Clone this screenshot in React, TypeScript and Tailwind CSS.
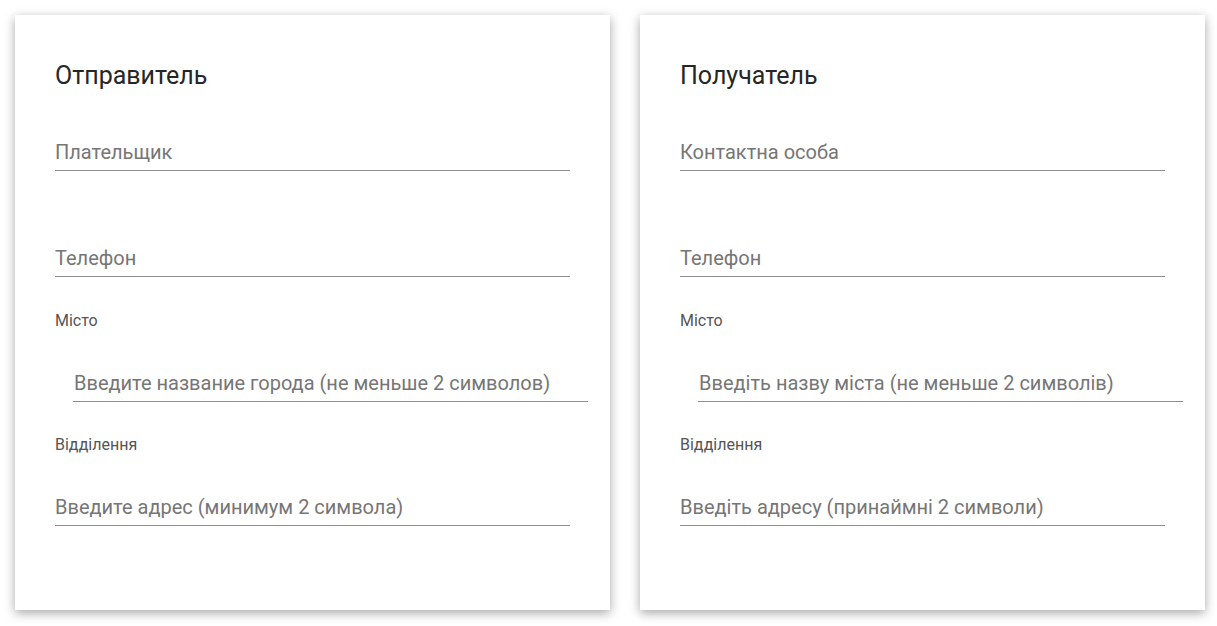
import React from "react";

type Field =
  | { kind: "input"; placeholder: string; gap: number; indent?: boolean }
  | { kind: "label"; text: string; gap: number };

function FieldInput({ placeholder, indent }: { placeholder: string; indent?: boolean }) {
  return (
    <input
      type="text"
      placeholder={placeholder}
      className={`block h-[38px] w-full border-b border-[#8e8e8e] bg-transparent text-[20px] text-[#212121] outline-none placeholder:text-[#767676] ${
        indent ? "translate-x-[18px] pl-[1px]" : ""
      }`}
    />
  );
}

function Card({ title, fields, width }: { title: string; fields: Field[]; width: string }) {
  return (
    <div className={`${width} h-[595px] shrink-0 bg-white px-10 pt-[46px] shadow-[0_3px_10px_rgba(0,0,0,0.35)]`}>
      <h2 className="text-[25px] leading-[29px] text-[#262626]">{title}</h2>
      {fields.map((f, i) =>
        f.kind === "input" ? (
          <div key={i} style={{ marginTop: f.gap }}>
            <FieldInput placeholder={f.placeholder} indent={f.indent} />
          </div>
        ) : (
          <div key={i} style={{ marginTop: f.gap }} className="text-[16px] leading-4 text-[#555]">
            {f.text}
          </div>
        )
      )}
    </div>
  );
}

export default function App() {
  return (
    <div className="min-h-screen bg-white font-['Roboto',sans-serif]">
      <div className="flex gap-[30px] pl-[15px] pt-[15px]">
        <Card
          title="Отправитель"
          width="w-[595px]"
          fields={[
            { kind: "input", placeholder: "Плательщик", gap: 43 },
            { kind: "input", placeholder: "Телефон", gap: 68 },
            { kind: "label", text: "Місто", gap: 36 },
            { kind: "input", placeholder: "Введите название города (не меньше 2 символов)", gap: 35, indent: true },
            { kind: "label", text: "Відділення", gap: 35 },
            { kind: "input", placeholder: "Введите адрес (минимум 2 символа)", gap: 35 },
          ]}
        />
        <Card
          title="Получатель"
          width="w-[565px]"
          fields={[
            { kind: "input", placeholder: "Контактна особа", gap: 43 },
            { kind: "input", placeholder: "Телефон", gap: 68 },
            { kind: "label", text: "Місто", gap: 36 },
            { kind: "input", placeholder: "Введіть назву міста (не меньше 2 символів)", gap: 35, indent: true },
            { kind: "label", text: "Відділення", gap: 35 },
            { kind: "input", placeholder: "Введіть адресу (принаймні 2 символи)", gap: 35 },
          ]}
        />
      </div>
    </div>
  );
}
